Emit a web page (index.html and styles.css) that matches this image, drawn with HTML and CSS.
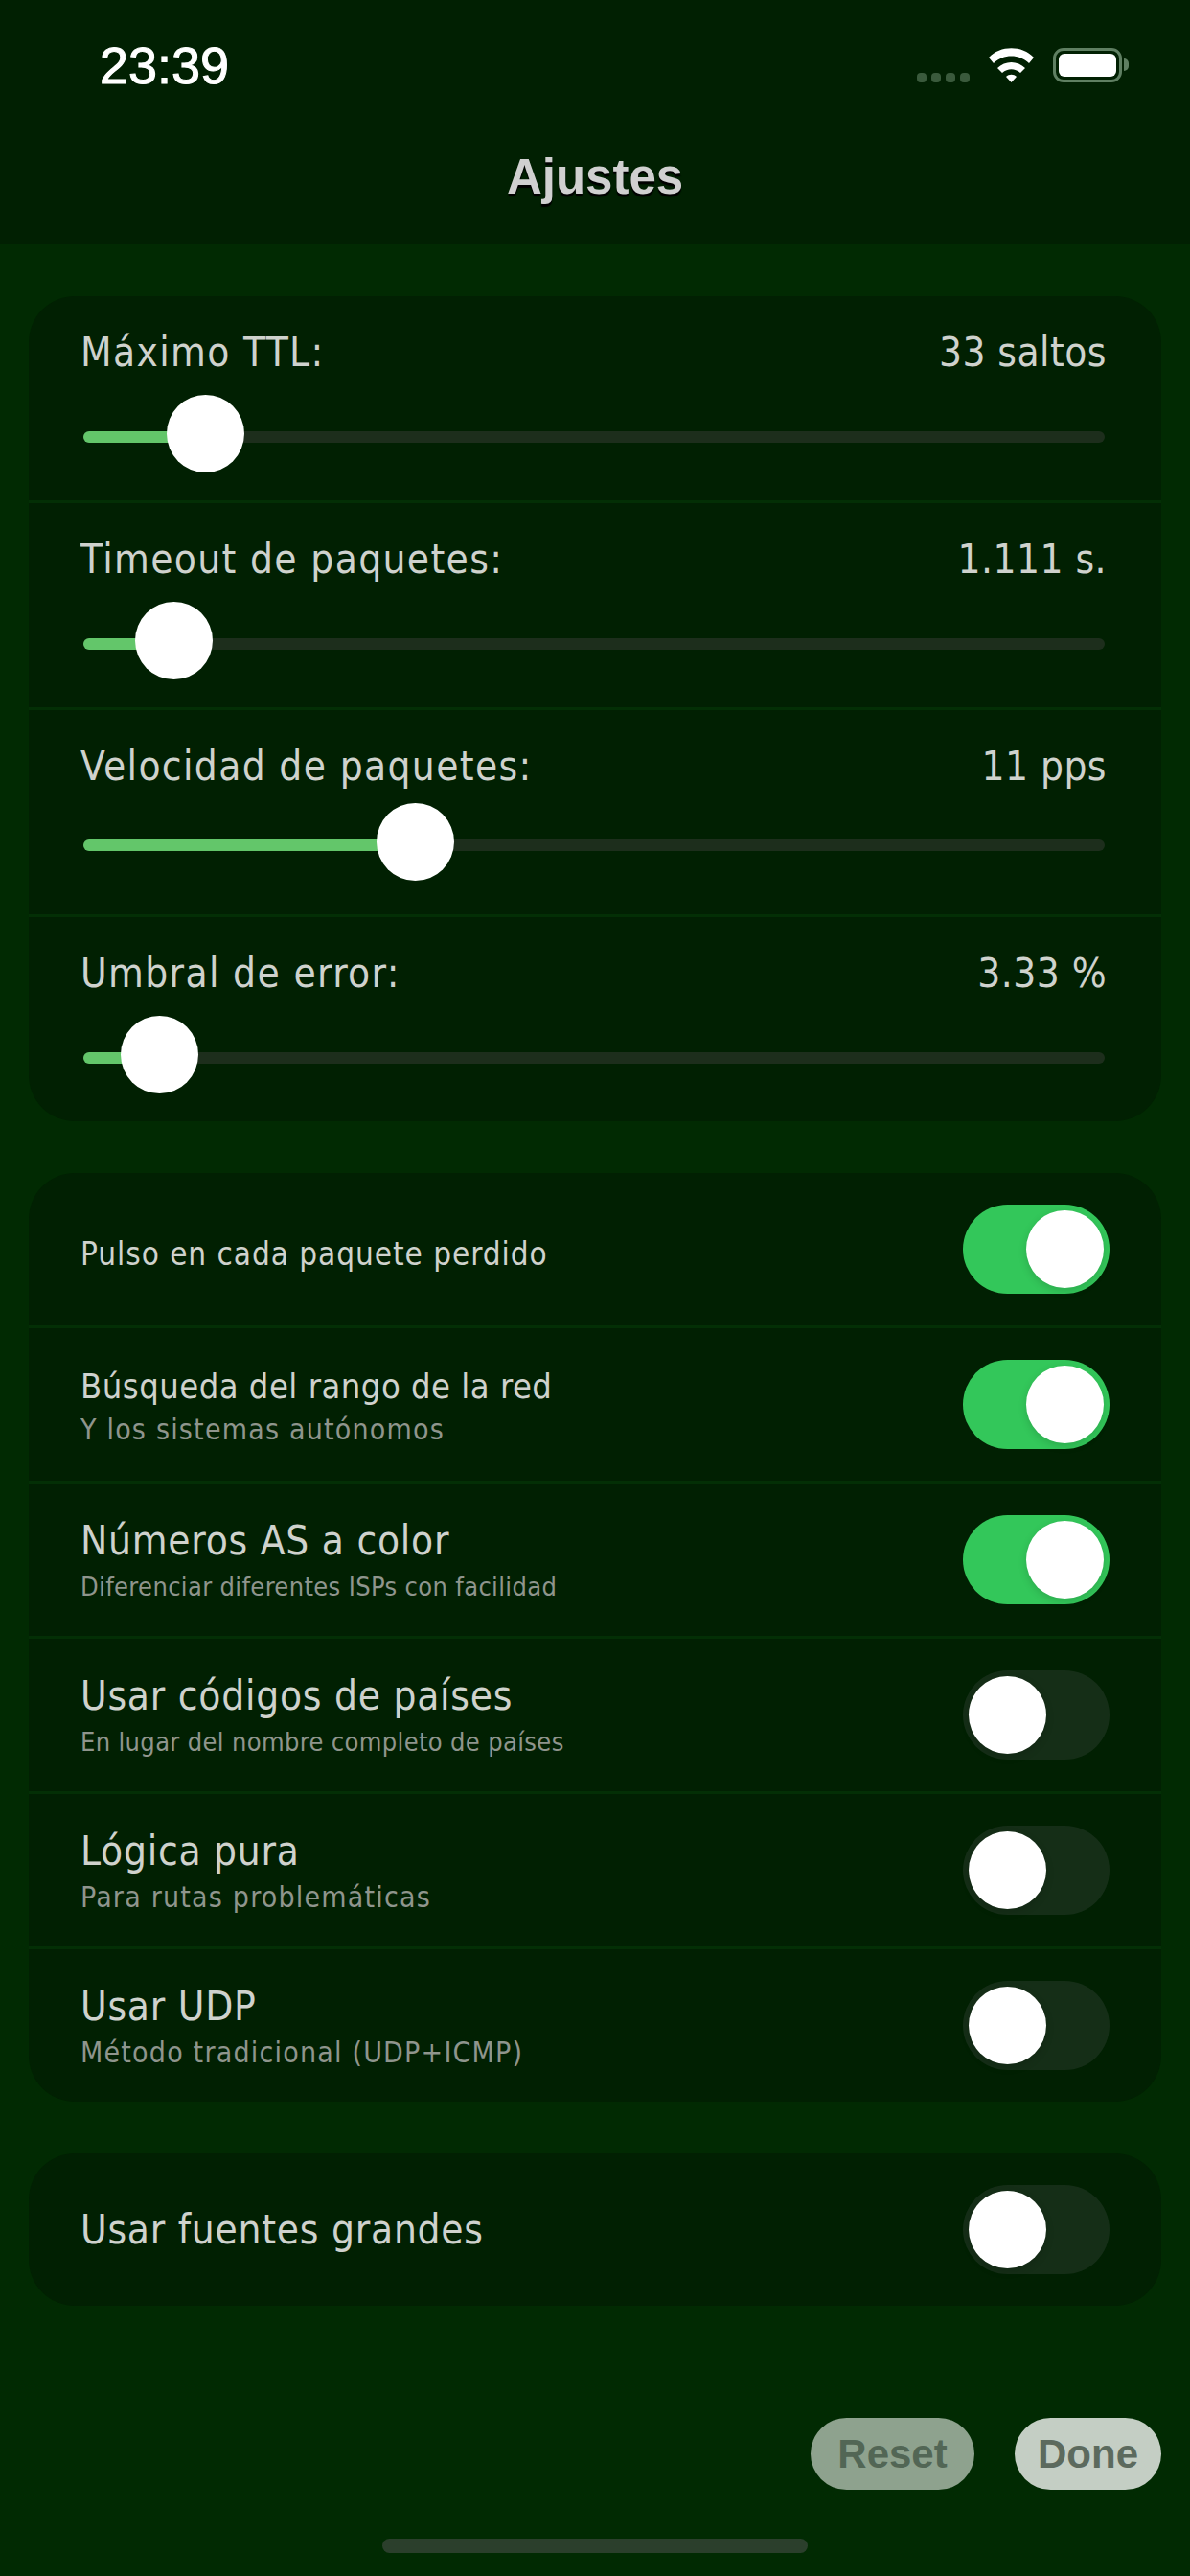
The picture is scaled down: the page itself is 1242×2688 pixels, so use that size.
FILE: index.html

```html
<!DOCTYPE html>
<html lang="es">
<head>
    <meta charset="UTF-8">
    <meta name="viewport" content="width=device-width, initial-scale=1.0">
    <title>Ajustes</title>
    <link rel="stylesheet" href="styles.css">
</head>
<body>
    <div class="screen">
        <header class="header">
            <div class="status-bar">
                <span class="time">23:39</span>
                <div class="status-icons">
                    <div class="signal"><i></i><i></i><i></i><i></i></div>
                    <svg class="wifi" width="47" height="36" viewBox="0 0 47 36">
                        <path d="M0 10C12-3 35-3 47 10L42 16C32 6 15 6 5 16Z"/>
                        <path d="M9 21C17 13 30 13 38 21L33 26C27 21 20 21 14 26Z"/>
                        <path d="M18 30C21 27 26 27 29 30L23.5 36Z"/>
                    </svg>
                    <div class="battery"><div class="battery-level"></div></div>
                    <div class="battery-nub"></div>
                </div>
            </div>
            <h1 class="title">Ajustes</h1>
        </header>

        <main class="content">
            <section class="card">
                <div class="slider-row">
                    <div class="slider-head"><span>Máximo TTL:</span><span class="slider-value">33 saltos</span></div>
                    <div class="slider"><div class="slider-fill" style="width: 127px"></div><div class="slider-thumb" style="left: 87px"></div></div>
                </div>
                <div class="slider-row">
                    <div class="slider-head"><span>Timeout de paquetes:</span><span class="slider-value">1.111 s.</span></div>
                    <div class="slider"><div class="slider-fill" style="width: 94px"></div><div class="slider-thumb" style="left: 54px"></div></div>
                </div>
                <div class="slider-row">
                    <div class="slider-head"><span>Velocidad de paquetes:</span><span class="slider-value">11 pps</span></div>
                    <div class="slider slider-high"><div class="slider-fill" style="width: 346px"></div><div class="slider-thumb" style="left: 306px"></div></div>
                </div>
                <div class="slider-row">
                    <div class="slider-head"><span>Umbral de error:</span><span class="slider-value">3.33 %</span></div>
                    <div class="slider"><div class="slider-fill" style="width: 79px"></div><div class="slider-thumb" style="left: 39px"></div></div>
                </div>
            </section>

            <section class="card">
                <div class="toggle-row">
                    <div class="toggle-text"><div class="label label-small">Pulso en cada paquete perdido</div></div>
                    <div class="toggle on"><div class="knob"></div></div>
                </div>
                <div class="toggle-row">
                    <div class="toggle-text">
                        <div class="label label-medium">Búsqueda del rango de la red</div>
                        <div class="sublabel">Y los sistemas autónomos</div>
                    </div>
                    <div class="toggle on"><div class="knob"></div></div>
                </div>
                <div class="toggle-row">
                    <div class="toggle-text">
                        <div class="label">Números AS a color</div>
                        <div class="sublabel sublabel-small">Diferenciar diferentes ISPs con facilidad</div>
                    </div>
                    <div class="toggle on"><div class="knob"></div></div>
                </div>
                <div class="toggle-row">
                    <div class="toggle-text">
                        <div class="label">Usar códigos de países</div>
                        <div class="sublabel sublabel-small">En lugar del nombre completo de países</div>
                    </div>
                    <div class="toggle"><div class="knob"></div></div>
                </div>
                <div class="toggle-row">
                    <div class="toggle-text">
                        <div class="label">Lógica pura</div>
                        <div class="sublabel">Para rutas problemáticas</div>
                    </div>
                    <div class="toggle"><div class="knob"></div></div>
                </div>
                <div class="toggle-row">
                    <div class="toggle-text">
                        <div class="label">Usar UDP</div>
                        <div class="sublabel">Método tradicional (UDP+ICMP)</div>
                    </div>
                    <div class="toggle"><div class="knob"></div></div>
                </div>
            </section>

            <section class="card">
                <div class="toggle-row">
                    <div class="toggle-text"><div class="label">Usar fuentes grandes</div></div>
                    <div class="toggle"><div class="knob"></div></div>
                </div>
            </section>

            <div class="actions">
                <button class="action-btn reset">Reset</button>
                <button class="action-btn done">Done</button>
            </div>
        </main>

        <div class="home-bar"></div>
    </div>
</body>
</html>
```

FILE: styles.css

```css
* { margin: 0; padding: 0; box-sizing: border-box; }
body {
    background: #012a02;
    color: #cfd2cd;
    font-family: 'DejaVu Sans', sans-serif;
    font-stretch: condensed;
}
.screen { height: 2688px; overflow: hidden; display: flex; flex-direction: column; }

/* top area */
.header { height: 255px; background: #012002; }
.status-bar {
    display: flex;
    justify-content: space-between;
    align-items: center;
    height: 136px;
    padding: 0 64px 0 104px;
}
.time {
    font-family: 'Liberation Sans', sans-serif;
    font-stretch: normal;
    font-size: 54px;
    color: #fff;
    -webkit-text-stroke: 1px #fff;
}
.status-icons { display: flex; align-items: flex-end; }
.signal { display: flex; gap: 5px; margin-right: 20px; }
.signal i { width: 10px; height: 10px; border-radius: 4px; background: #3a5a3c; }
.wifi { fill: #fff; margin-right: 20px; }
.battery {
    width: 72px;
    height: 36px;
    border: 3px solid #5f7f62;
    border-radius: 11px;
    padding: 3px;
}
.battery-level { width: 100%; height: 100%; background: #fff; border-radius: 6px; }
.battery-nub {
    width: 5px;
    height: 13px;
    margin: 0 0 12px 2px;
    background: #5f7f62;
    border-radius: 0 6px 6px 0;
}
.title {
    font-family: 'Liberation Sans', sans-serif;
    font-stretch: normal;
    font-size: 51px;
    font-weight: bold;
    text-align: center;
    color: #d0d0d0;
    line-height: 60px;
    margin-top: 19px;
    text-shadow: 0 3px 1px #000;
}

/* cards */
.content { flex: 1; padding: 54px 30px 0; }
.card { background: #012002; border-radius: 48px; margin-bottom: 54px; overflow: hidden; }

.slider-row {
    height: 216px;
    padding: 31px 54px 0;
    border-bottom: 3px solid #032f05;
}
.slider-row:last-child { border-bottom: none; height: 213px; }
.slider-head {
    display: flex;
    justify-content: space-between;
    font-size: 42px;
    line-height: 56px;
    letter-spacing: 1.35px;
    padding-right: 3px;
}
.slider-value { letter-spacing: 0.45px; }
.slider {
    position: relative;
    height: 12px;
    margin: 54px 5px 0 3px;
    background: #1d2e1c;
    border-radius: 6px;
}
.slider-high { margin-top: 48px; }
.slider-fill { height: 100%; background: #63c66a; border-radius: 6px; }
.slider-thumb {
    position: absolute;
    top: -38px;
    width: 81px;
    height: 81px;
    background: #fff;
    border-radius: 50%;
}

.toggle-row {
    display: flex;
    justify-content: space-between;
    align-items: center;
    height: 162px;
    padding: 0 54px;
    border-bottom: 3px solid #032f05;
}
.toggle-row:last-child { border-bottom: none; height: 159px; }
.label { font-size: 42px; line-height: 50px; letter-spacing: 0.75px; }
.label-medium { font-size: 36px; line-height: 44px; padding-top: 3px; letter-spacing: 0.5px; }
.label-small { font-size: 33px; padding-top: 10px; letter-spacing: 0.95px; }
.sublabel {
    font-size: 30px;
    line-height: 40px;
    letter-spacing: 1.2px;
    color: #8f958d;
    margin: 3px 0 -3px;
}
.sublabel-small { font-size: 27px; letter-spacing: 0.35px; }

.toggle {
    width: 153px;
    height: 93px;
    padding: 6px;
    background: #152e17;
    border-radius: 47px;
}
.toggle.on { background: #33c75a; padding-left: 66px; }
.knob { width: 81px; height: 81px; background: #fff; border-radius: 50%; box-shadow: 0 3px 9px rgba(0, 0, 0, 0.15); }

/* bottom buttons */
.actions { display: flex; justify-content: flex-end; gap: 42px; margin-top: 117px; }
.action-btn {
    height: 75px;
    border: none;
    border-radius: 38px;
    font-family: 'Liberation Sans', sans-serif;
    font-stretch: normal;
    font-size: 42px;
    font-weight: bold;
}
.reset { width: 171px; background: #8ea28e; color: #526655; }
.done { width: 153px; background: #c4cec4; color: #5c6a5e; }

.home-bar {
    width: 444px;
    height: 15px;
    margin: 0 auto 24px;
    background: #2b3f2c;
    border-radius: 8px;
}
```
